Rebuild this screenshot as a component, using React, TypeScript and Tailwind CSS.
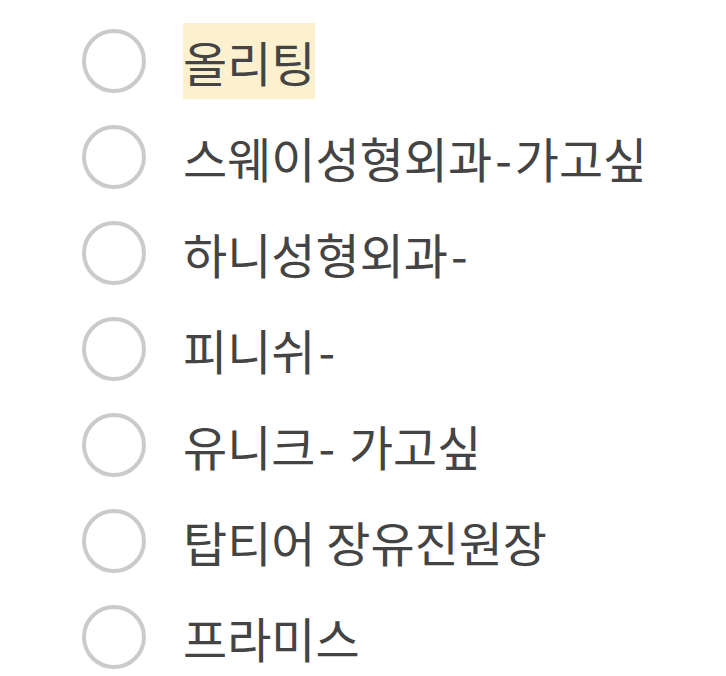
const items = [
  "올리팅",
  "스웨이성형외과-가고싶",
  "하니성형외과-",
  "피니쉬-",
  "유니크- 가고싶",
  "탑티어 장유진원장",
  "프라미스",
];

// hyphens in the reference font sit a bit wider than in Noto CJK
function Label({ text }: { text: string }) {
  const parts = text.split("-");
  return (
    <>
      {parts.map((p, i) => (
        <span key={i}>
          {p}
          {i < parts.length - 1 && <span className="mx-[3px]">-</span>}
        </span>
      ))}
    </>
  );
}

export default function App() {
  return (
    <div className="w-[726px] h-[676px] bg-white pt-[13px] pl-[82px] font-['Noto_Sans_CJK_KR','Noto_Sans',sans-serif] overflow-hidden">
      {items.map((label, i) => (
        <div key={i} className="flex items-center h-[96px]">
          <div className="w-[64px] h-[64px] rounded-full border-[4px] border-[#cbcbcb] shrink-0" />
          <span
            className={
              "ml-[37px] text-[48px] leading-[76px] text-[#444444] whitespace-nowrap " +
              (i === 0 ? "bg-[#fcf1cf]" : "")
            }
          >
            <Label text={label} />
          </span>
        </div>
      ))}
    </div>
  );
}
